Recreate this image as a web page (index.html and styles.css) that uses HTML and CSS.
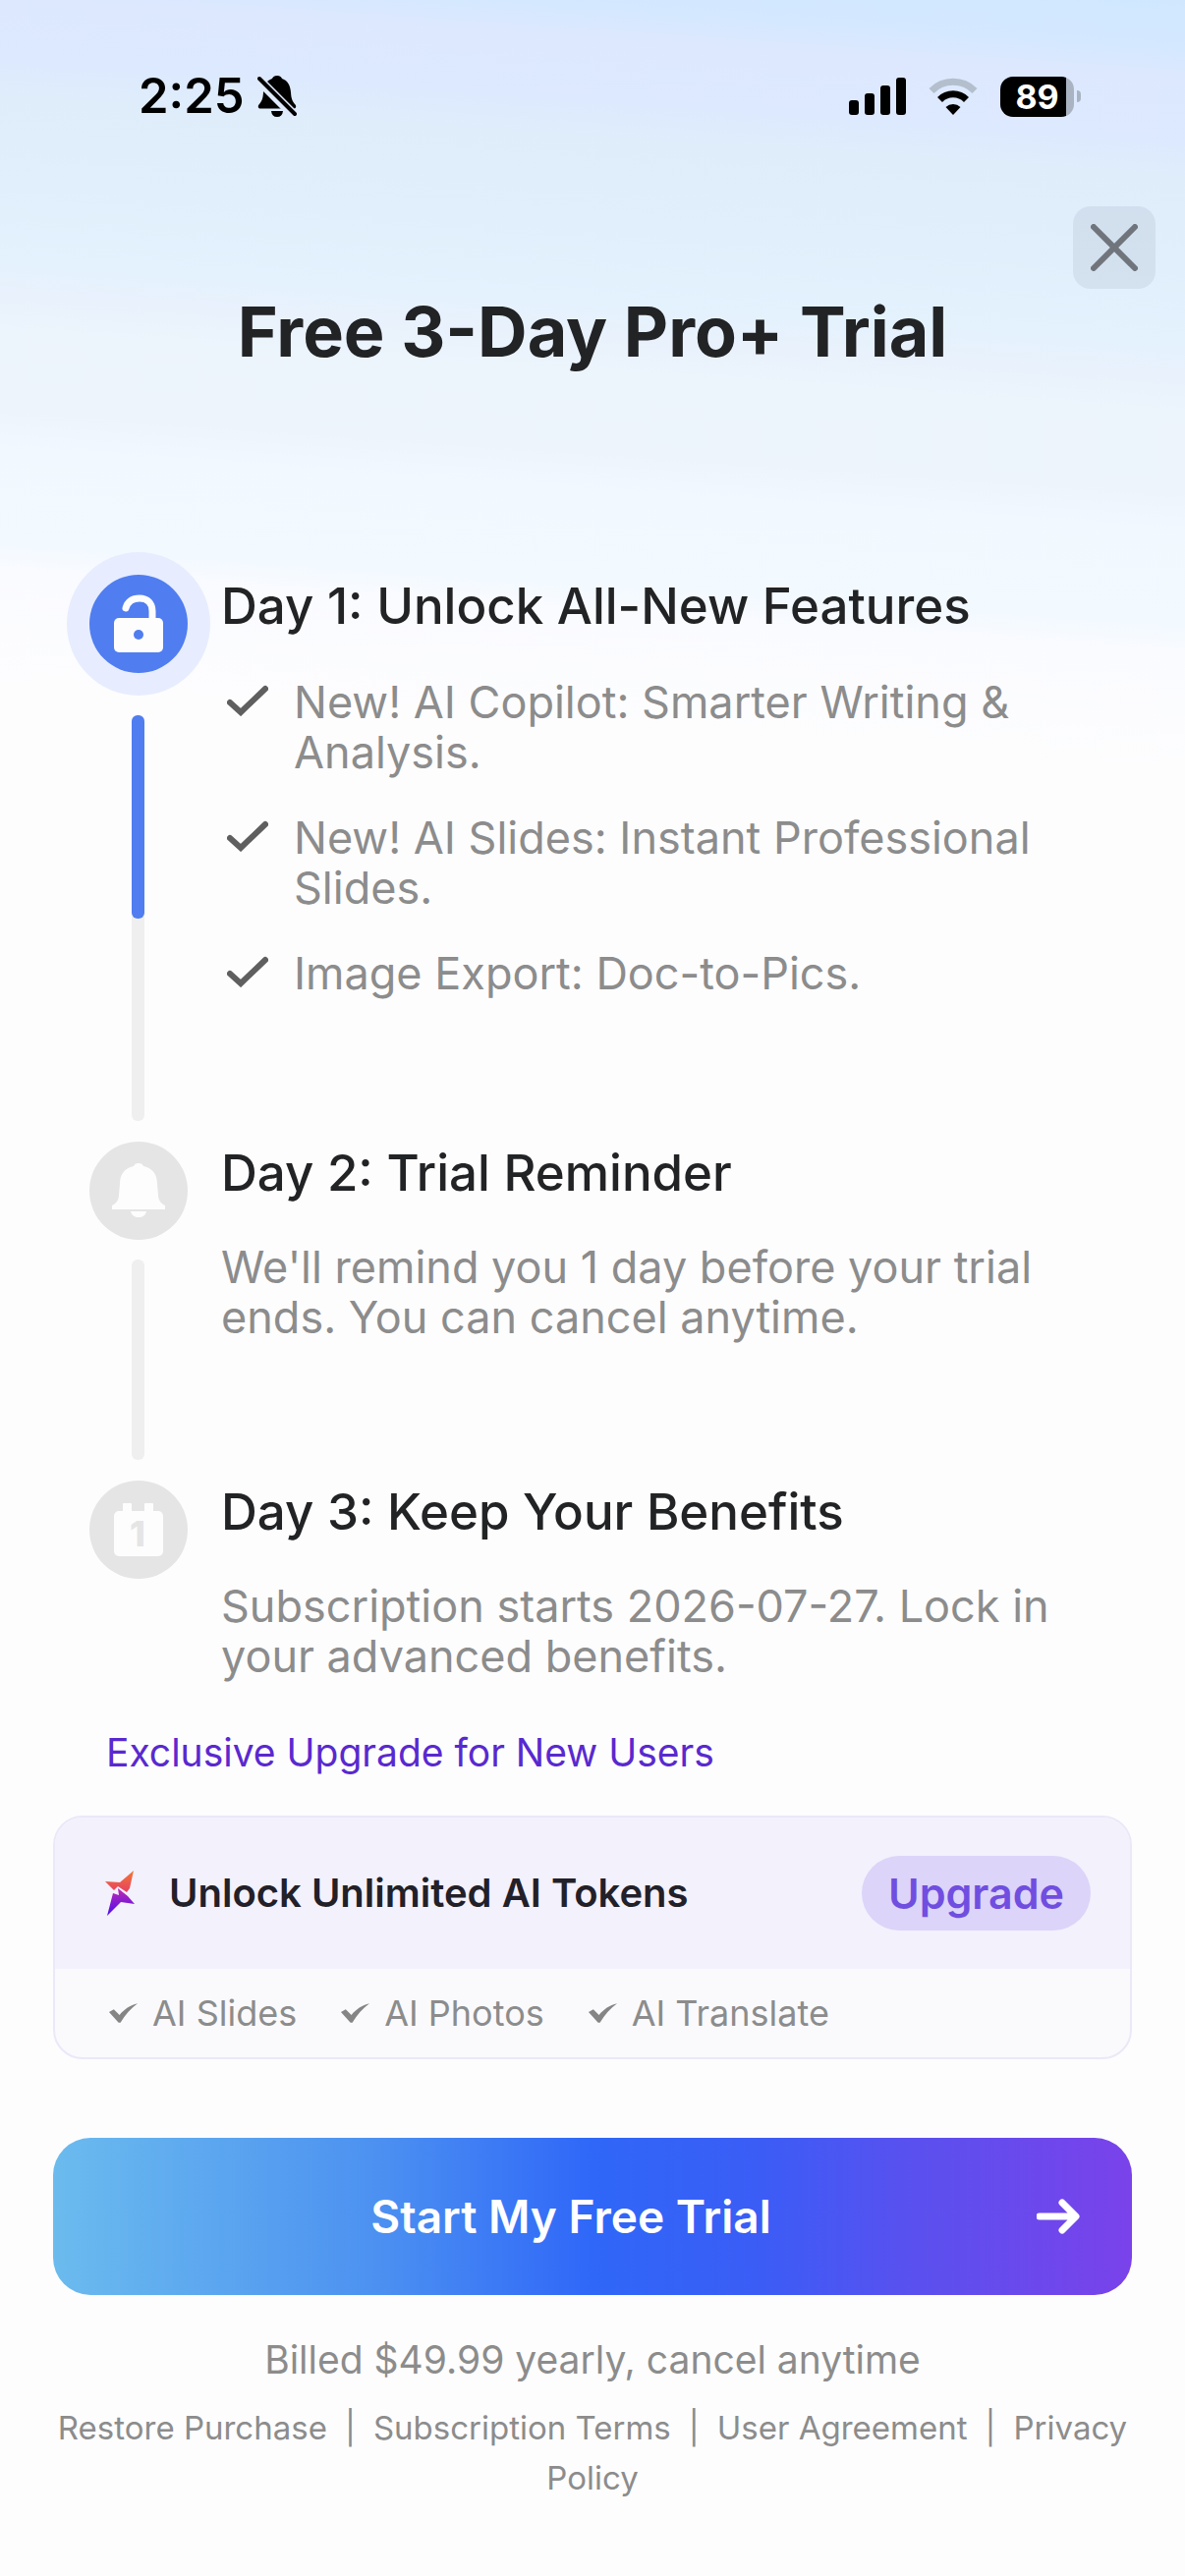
FILE: index.html
```html
<!DOCTYPE html>
<html lang="en">
<head>
<meta charset="utf-8">
<meta name="viewport" content="width=device-width, initial-scale=1">
<title>Free 3-Day Pro+ Trial</title>
<link rel="stylesheet" href="styles.css">
</head>
<body>
<div class="screen">
  <div class="status-bar">
    <div class="status-left">
      <span class="clock">2:25</span>
      <svg class="mute" viewBox="0 0 40 44" aria-hidden="true">
        <path d="M20 1c3 0 4.500 1.500 5 3 6 2 8.500 7 9 14 .5 7 1.500 9 4.500 12.500 1.500 2 .5 4-1.500 4H3c-2 0-3-2-1.500-4C4.500 27 5.500 25 6 18c.5-7 3-12 9-14 .5-1.500 2-3 5-3z"/>
        <path d="M14 37h12c-.5 4-2.500 6-6 6s-5.500-2-6-6z"/>
        <path class="mute-gap" d="M-1 3l42 42"/>
        <path class="mute-slash" d="M2 4l36 36"/>
      </svg>
    </div>
    <div class="status-right">
      <svg class="signal" viewBox="0 0 58 38" aria-hidden="true">
        <rect x="0" y="23" width="10" height="15" rx="3"/>
        <rect x="16" y="16" width="10" height="22" rx="3"/>
        <rect x="32" y="8" width="10" height="30" rx="3"/>
        <rect x="48" y="0" width="10" height="38" rx="3"/>
      </svg>
      <svg class="wifi" viewBox="0 0 50 38" aria-hidden="true">
        <path class="wifi-faint" d="M3 13.500a31 31 0 0 1 44 0"/>
        <path class="wifi-arc" d="M11.500 22.500a19 19 0 0 1 27 0"/>
        <path d="M25 38l-7.500-8a11 11 0 0 1 15 0z"/>
      </svg>
      <div class="battery"><span class="battery-level">89</span><span class="battery-tip"></span></div>
    </div>
  </div>

  <div class="toolbar">
    <button class="close" type="button" aria-label="Close">
      <svg viewBox="0 0 48 48" aria-hidden="true"><path d="M3 3l42 42M45 3L3 45"/></svg>
    </button>
  </div>

  <h1 class="title">Free 3-Day Pro+ Trial</h1>

  <ol class="timeline">
    <li class="step">
      <div class="rail">
        <div class="halo">
          <div class="dot dot-active">
            <svg viewBox="0 0 52 60" aria-hidden="true">
              <path class="shackle" d="M13 14C15 7 20 4 27 4c8 0 13 5 13 13v9"/>
              <rect x="1" y="24" width="50" height="35" rx="5"/>
              <circle class="keyhole" cx="26" cy="41" r="5"/>
            </svg>
          </div>
        </div>
        <div class="line line-first"><div class="line-done"></div></div>
      </div>
      <div class="step-body step-body-first">
        <h2>Day 1: Unlock All-New Features</h2>
        <ul class="features">
          <li><svg viewBox="0 0 42 32" aria-hidden="true"><path d="M3 18l11 10L39 4"/></svg>New! AI Copilot: Smarter Writing &amp; Analysis.</li>
          <li><svg viewBox="0 0 42 32" aria-hidden="true"><path d="M3 18l11 10L39 4"/></svg>New! AI Slides: Instant Professional Slides.</li>
          <li><svg viewBox="0 0 42 32" aria-hidden="true"><path d="M3 18l11 10L39 4"/></svg>Image Export: Doc-to-Pics.</li>
        </ul>
      </div>
    </li>
    <li class="step">
      <div class="rail">
        <div class="dot">
          <svg viewBox="0 0 56 60" aria-hidden="true">
            <path d="M28 2c3 0 4 1 5 3 10 2 14 9 14 18l1 11c0 6 3 9 7 11v4H1v-4c4-2 7-5 7-11l1-11C9 14 13 7 23 5c1-2 2-3 5-3z"/>
            <path d="M20 51h16c-1 4-4 6-8 6s-7-2-8-6z"/>
          </svg>
        </div>
        <div class="line"></div>
      </div>
      <div class="step-body">
        <h2>Day 2: Trial Reminder</h2>
        <p>We'll remind you 1 day before your trial ends. You can cancel anytime.</p>
      </div>
    </li>
    <li class="step">
      <div class="rail">
        <div class="dot">
          <svg viewBox="0 0 52 60" aria-hidden="true">
            <path d="M10 11V4a1 1 0 0 1 1-1h7a1 1 0 0 1 1 1v7h13V4a1 1 0 0 1 1-1h7a1 1 0 0 1 1 1v7h5a5 5 0 0 1 5 5v36a5 5 0 0 1-5 5H6a5 5 0 0 1-5-5V16a5 5 0 0 1 5-5z"/>
            <text class="date" x="25" y="47" text-anchor="middle">1</text>
          </svg>
        </div>
      </div>
      <div class="step-body">
        <h2>Day 3: Keep Your Benefits</h2>
        <p>Subscription starts 2026-07-27. Lock in your advanced benefits.</p>
      </div>
    </li>
  </ol>

  <section class="offer">
    <h3 class="offer-label">Exclusive Upgrade for New Users</h3>
    <div class="card">
      <div class="card-head">
        <svg class="spark" viewBox="0 0 32 48" aria-hidden="true">
          <defs>
            <linearGradient id="warm" x1="0" y1="0" x2="0" y2="1"><stop offset="0" stop-color="#f07a34"/><stop offset="1" stop-color="#e83f62"/></linearGradient>
            <linearGradient id="cool" x1="0" y1="0" x2="0" y2="1"><stop offset="0" stop-color="#c02bb0"/><stop offset="1" stop-color="#4a0cf0"/></linearGradient>
          </defs>
          <path fill="url(#warm)" d="M30 1l-4 18-3 4-9-6-4 4L1 12l15 1z"/>
          <path fill="url(#cool)" d="M14 19l10 8 7 8-14-2L3 47l6-23 6 2z"/>
        </svg>
        <span class="card-title">Unlock Unlimited AI Tokens</span>
        <button class="upgrade" type="button">Upgrade</button>
      </div>
      <ul class="perks">
        <li><svg viewBox="0 0 32 22" aria-hidden="true"><path d="M1 10l5-3 6 6C17 7 23 3 31 1 24 6 18 13 13 21h-2z"/></svg>AI Slides</li>
        <li><svg viewBox="0 0 32 22" aria-hidden="true"><path d="M1 10l5-3 6 6C17 7 23 3 31 1 24 6 18 13 13 21h-2z"/></svg>AI Photos</li>
        <li><svg viewBox="0 0 32 22" aria-hidden="true"><path d="M1 10l5-3 6 6C17 7 23 3 31 1 24 6 18 13 13 21h-2z"/></svg>AI Translate</li>
      </ul>
    </div>
  </section>

  <button class="cta" type="button">
    <span class="cta-label">Start My Free Trial</span>
    <svg viewBox="0 0 44 36" aria-hidden="true"><path d="M3 18h36M26 4l14 14-14 14"/></svg>
  </button>

  <p class="billing">Billed $49.99 yearly, cancel anytime</p>
  <nav class="legal"><a href="#">Restore Purchase</a><span class="sep">|</span><a href="#">Subscription Terms</a><span class="sep">|</span><a href="#">User Agreement</a><span class="sep">|</span><a href="#">Privacy Policy</a></nav>
</div>
</body>
</html>
```
FILE: styles.css
```css
* { box-sizing: border-box; }

body {
  margin: 0;
  background: #fdfdfe;
  color: #222325;
  font-family: Inter, "Liberation Sans", sans-serif;
}

h1, h2, h3, p, ul, ol { margin: 0; padding: 0; }
ul, ol { list-style: none; }
button { border: 0; font-family: inherit; }

.screen {
  min-height: 100vh;
  padding: 0 54px;
  background: linear-gradient(184deg, #d0e8ff 0, #d4e8ff 50px, #dde8fe 80px, #dde9fe 145px, #dfedfb 180px, #e1effc 270px, #e4f2fe 350px, #e9f1fc 385px, #ecf4fc 420px, #edf4fc 500px, #f1f8ff 540px, #f2f9ff 635px, #fafbff 665px, #fdfdfe 780px);
}

/* Status bar */
.status-bar {
  display: flex;
  justify-content: space-between;
  align-items: center;
  padding: 76px 52px 0 87px;
  height: 120px;
}
.status-left { display: flex; align-items: center; gap: 13px; }
.clock { font-size: 49px; line-height: 44px; font-weight: 600; color: #000; }
.mute { width: 40px; height: 44px; }
.mute-gap { stroke: #dfeafc; stroke-width: 10; }
.mute-slash { stroke: #000; stroke-width: 4; stroke-linecap: round; }
.status-right { display: flex; align-items: center; gap: 23px; }
.signal { width: 58px; height: 38px; }
.wifi { width: 50px; height: 38px; }
.wifi path { fill: #000; }
.wifi .wifi-faint { fill: none; stroke: #b3bfcd; stroke-width: 7; }
.wifi .wifi-arc { fill: none; stroke: #000; stroke-width: 7; }
.battery { display: flex; align-items: center; gap: 3px; }
.battery-level {
  width: 75px;
  height: 41px;
  border-radius: 13px;
  background: linear-gradient(90deg, #000 67px, #a9b3c1 67px);
  color: #fff;
  font-size: 34px;
  line-height: 41px;
  font-weight: 700;
  text-align: center;
}
.battery-tip { width: 4px; height: 12px; border-radius: 0 4px 4px 0; background: #a9b3c1; }

/* Close button */
.toolbar { display: flex; justify-content: flex-end; padding-top: 90px; margin-right: -24px; }
.close {
  display: grid;
  place-items: center;
  width: 84px;
  height: 84px;
  padding: 0;
  border-radius: 18px;
  background: rgba(90, 100, 120, 0.1);
}
.close svg { width: 48px; height: 48px; fill: none; stroke: #70757c; stroke-width: 6; stroke-linecap: round; }

.title { font-size: 70px; line-height: 88px; font-weight: 700; text-align: center; }

/* Timeline */
.timeline { padding: 180px 14px 0; }
.step { display: flex; gap: 12px; }
.rail { display: flex; flex-direction: column; align-items: center; gap: 20px; width: 145px; flex: none; padding-bottom: 21px; }
.halo { display: grid; place-items: center; width: 146px; height: 146px; border-radius: 50%; background: #e7edfe; }
.dot { display: grid; place-items: center; width: 100px; height: 100px; flex: none; border-radius: 50%; background: #e5e5e5; }
.dot-active { background: #507df0; }
.dot svg { width: 56px; height: 60px; fill: #fdfdfe; }
.dot .shackle { fill: none; stroke: #fdfdfe; stroke-width: 7; stroke-linecap: round; }
.dot .keyhole { fill: #507df0; }
.dot .date { fill: #e5e5e5; font-size: 36px; font-weight: 800; }
.line { width: 13px; flex: 1; min-height: 204px; border-radius: 6px; background: #efefef; }
.line-done { height: 50%; border-radius: 6px; background: #507df0; }
.step-body { flex: 1; padding-bottom: 21px; }
.step-body-first { padding-top: 23px; padding-bottom: 0; }
h2 { font-size: 51px; line-height: 64px; font-weight: 500; }
.step-body p { margin-top: 38px; color: #8c8c8c; font-size: 45px; line-height: 51px; }
.features { display: grid; gap: 36px; margin-top: 40px; padding-bottom: 146px; color: #8c8c8c; font-size: 45px; line-height: 51px; }
.features li { display: flex; align-items: flex-start; gap: 26px; }
.features svg { width: 42px; height: 32px; flex: none; margin: 8px 0 0 6px; fill: none; stroke: #5f5f5f; stroke-width: 6; stroke-linecap: round; }

/* Offer */
.offer { padding-top: 28px; }
.offer-label { padding: 0 54px; color: #5929cf; font-size: 39px; line-height: 48px; font-weight: 400; }
.card { margin-top: 40px; border: 2px solid #ebe8f8; border-radius: 30px; background: #fafafd; overflow: hidden; }
.card-head { display: flex; align-items: center; height: 154px; padding: 0 40px 0 50px; background: #f3f1fc; }
.spark { width: 32px; height: 48px; }
.card-title { flex: 1; margin-left: 34px; font-size: 40px; line-height: 48px; font-weight: 600; color: #222028; }
.upgrade { height: 76px; padding: 0 27px; border-radius: 38px; background: #dcd4f9; color: #704ee0; font-size: 43px; font-weight: 600; }
.perks { display: flex; gap: 44px; height: 90px; align-items: center; padding: 0 54px; color: #8c8c8c; font-size: 36px; line-height: 44px; }
.perks li { display: flex; align-items: center; gap: 14px; }
.perks svg { width: 31px; height: 22px; fill: #858585; }

/* Call to action */
.cta {
  display: flex;
  align-items: center;
  width: 100%;
  height: 160px;
  margin-top: 80px;
  padding: 0 53px;
  border-radius: 38px;
  background: linear-gradient(90deg, #6bbbee 0%, #4c91f1 30%, #2f67f8 50%, #3a5df6 65%, #5a50ef 80%, #7a42ea 100%);
  color: #fff;
}
.cta-label { flex: 1; font-size: 46px; font-weight: 600; text-align: center; }
.cta svg { width: 44px; height: 36px; fill: none; stroke: #fff; stroke-width: 7; stroke-linecap: round; stroke-linejoin: round; }

.billing { margin-top: 42px; color: #8c8c8c; font-size: 39px; line-height: 48px; text-align: center; }
.legal { margin-top: 20px; color: #8c8c8c; font-size: 33px; line-height: 51px; text-align: center; }
.legal a { color: inherit; text-decoration: none; }
.sep { margin: 0 18px; }
```
